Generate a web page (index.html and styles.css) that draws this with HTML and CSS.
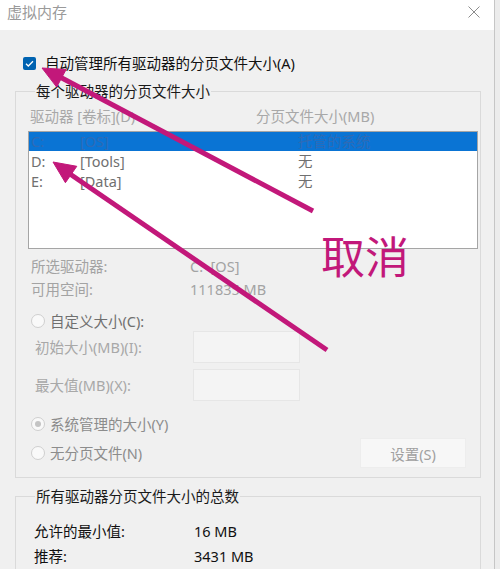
FILE: index.html
```html
<!DOCTYPE html>
<html lang="zh-CN">
<head>
<meta charset="utf-8">
<title>虚拟内存</title>
<link rel="stylesheet" href="styles.css">
</head>
<body>
<div class="window">
  <div class="titlebar">
    <span class="title">虚拟内存</span>
    <svg class="close" width="12" height="12" viewBox="0 0 12 12"><path d="M0.5 0.5 L11.5 11.5 M11.5 0.5 L0.5 11.5" stroke="#8c8c8c" stroke-width="1" fill="none"/></svg>
  </div>
  <div class="content">
    <div class="check-row">
      <span class="checkbox"><svg width="13" height="13" viewBox="0 0 13 13"><path d="M3 6.8 L5.3 9 L10 4.2" stroke="#fff" stroke-width="1.3" fill="none"/></svg></span>
      <span class="check-label">自动管理所有驱动器的分页文件大小(A)</span>
    </div>

    <fieldset class="group g1">
      <legend>每个驱动器的分页文件大小</legend>
      <div class="cols">
        <span class="col-a">驱动器 [卷标](D)</span>
        <span class="col-b">分页文件大小(MB)</span>
      </div>
      <div class="listbox">
        <div class="lrow sel"><span class="drv">C:</span><span class="vol">[OS]</span><span class="size">托管的系统</span></div>
        <div class="lrow"><span class="drv">D:</span><span class="vol">[Tools]</span><span class="size">无</span></div>
        <div class="lrow"><span class="drv">E:</span><span class="vol">[Data]</span><span class="size">无</span></div>
      </div>
      <div class="info">
        <div class="irow"><span class="ilabel">所选驱动器:</span><span>C:&nbsp; [OS]</span></div>
        <div class="irow"><span class="ilabel">可用空间:</span><span>111835 MB</span></div>
      </div>
      <div class="radio-row r-custom"><span class="radio"></span><span class="rlabel dark">自定义大小(C):</span></div>
      <div class="field-row f1"><span class="flabel">初始大小(MB)(I):</span><span class="input"></span></div>
      <div class="field-row f2"><span class="flabel">最大值(MB)(X):</span><span class="input"></span></div>
      <div class="radio-row r-sys"><span class="radio on"></span><span class="rlabel mid">系统管理的大小(Y)</span></div>
      <div class="last-row">
        <div class="radio-row"><span class="radio"></span><span class="rlabel mid">无分页文件(N)</span></div>
        <span class="button">设置(S)</span>
      </div>
    </fieldset>

    <fieldset class="group g2">
      <legend>所有驱动器分页文件大小的总数</legend>
      <div class="trow t1"><span class="tlabel">允许的最小值:</span><span>16 MB</span></div>
      <div class="trow t2"><span class="tlabel">推荐:</span><span>3431 MB</span></div>
    </fieldset>
  </div>

  <svg class="annot" width="500" height="569" viewBox="0 0 500 569">
    <g fill="#c2187a" stroke="#c2187a">
      <line x1="313" y1="211" x2="60" y2="77" stroke-width="5"/>
      <polygon points="42,68 66.1,69.5 56.7,87.1" stroke-width="1"/>
      <line x1="327" y1="350" x2="70" y2="174" stroke-width="5"/>
      <polygon points="53,162 76.8,166.3 65.4,182.7" stroke-width="1"/>
    </g>
  </svg>
  <div class="note">取消</div>
</div>
</body>
</html>
```

FILE: styles.css
```css
html, body {
  margin: 0;
  padding: 0;
}
body {
  background: #ececec;
  font-family: "Noto Sans", "Noto Sans CJK SC", sans-serif;
  font-size: 14.5px;
  color: #1a1a1a;
  width: 500px;
  height: 569px;
  overflow: hidden;
}
.window {
  position: relative;
  width: 494px;
  height: 569px;
  background: #f0f0f0;
  border-right: 1px solid #c6c6c6;
  overflow: hidden;
}
.titlebar {
  height: 30px;
  background: #fff;
  display: flex;
  align-items: center;
  justify-content: space-between;
  padding: 0 14px 0 7px;
  box-sizing: border-box;
}
.title {
  font-size: 15px;
  color: #9a9a9a;
  line-height: 18px;
  margin-top: -6px;
}
.close {
  margin-top: -6px;
  display: block;
}
.content {
  padding: 0 0 0 15px;
}
.check-row {
  display: flex;
  align-items: center;
  height: 16px;
  margin-top: 25px;
  padding-left: 8px;
}
.checkbox {
  width: 13px;
  height: 13px;
  background: #0063b1;
  border-radius: 2px;
  display: block;
}
.checkbox svg { display: block; }
.check-label {
  margin-left: 9px;
  line-height: 18px;
  color: #111;
}
.group {
  margin: 0;
  padding: 0 2px 0 12px;
  border: 1px solid #dadada;
  min-width: 0;
  width: 466px;
  box-sizing: border-box;
}
.group legend {
  padding: 0 1px;
  margin-left: 7px;
  line-height: 18px;
  font-size: 14.5px;
  color: #1a1a1a;
}
.g1 {
  margin-top: 11px;
  padding-bottom: 9px;
}
.cols {
  display: flex;
  margin-top: 7px;
  line-height: 18px;
  color: #a8a8a8;
  padding-left: 2px;
}
.col-a { width: 226px; }
.listbox {
  margin-top: 6px;
  width: 450px;
  height: 118px;
  box-sizing: border-box;
  border: 1px solid #a5a5a5;
  background: #fff;
}
.lrow {
  display: flex;
  height: 20px;
  line-height: 20px;
  padding-left: 2px;
  color: #707070;
}
.lrow.sel {
  background: #0a74d4;
  color: #2e6bb6;
  height: 19px;
  line-height: 19px;
}
.drv { width: 49px; }
.vol { width: 218px; }
.info {
  margin-top: 8px;
  padding-left: 3px;
  color: #a3a3a3;
  display: flex;
  flex-direction: column;
  gap: 5px;
}
.irow {
  display: flex;
  line-height: 18px;
}
.ilabel { width: 159px; }
.radio-row {
  display: flex;
  align-items: center;
  height: 18px;
  padding-left: 3px;
}
.r-custom { margin-top: 14px; }
.radio {
  width: 14px;
  height: 14px;
  box-sizing: border-box;
  border: 1px solid #cfcfcf;
  border-radius: 50%;
  background: #f9f9f9;
  display: flex;
  align-items: center;
  justify-content: center;
}
.radio.on::after {
  content: "";
  width: 6px;
  height: 6px;
  border-radius: 50%;
  background: #c4c4c4;
}
.rlabel {
  margin-left: 5px;
  line-height: 18px;
}
.rlabel.dark { color: #6f6f6f; }
.rlabel.mid { color: #8c8c8c; }
.field-row {
  display: flex;
  align-items: center;
  height: 32px;
  padding-left: 7px;
}
.f1 { margin-top: 1px; }
.f2 { margin-top: 6px; }
.flabel {
  width: 158px;
  color: #a8a8a8;
  line-height: 18px;
}
.input {
  width: 107px;
  height: 32px;
  box-sizing: border-box;
  background: #f4f4f4;
  border: 1px solid #e6e6e6;
}
.r-sys { margin-top: 14px; }
.last-row {
  display: flex;
  align-items: center;
  justify-content: space-between;
  margin-top: 5px;
  padding-right: 12px;
}
.button {
  width: 106px;
  height: 30px;
  box-sizing: border-box;
  background: #f7f7f7;
  border: 1px solid #ededed;
  color: #a0a0a0;
  display: flex;
  align-items: center;
  justify-content: center;
}
.g2 {
  margin-top: 9px;
  height: 100px;
}
.trow {
  display: flex;
  line-height: 18px;
  padding-left: 6px;
  color: #111;
}
.t1 { margin-top: 17px; }
.t2 { margin-top: 7px; }
.tlabel { width: 160px; }
.annot {
  position: absolute;
  left: 0;
  top: 0;
  pointer-events: none;
}
.note {
  position: absolute;
  left: 321px;
  top: 229px;
  font-family: "Noto Sans CJK SC", sans-serif;
  font-size: 44px;
  line-height: 52px;
  color: #c2187a;
}
```
